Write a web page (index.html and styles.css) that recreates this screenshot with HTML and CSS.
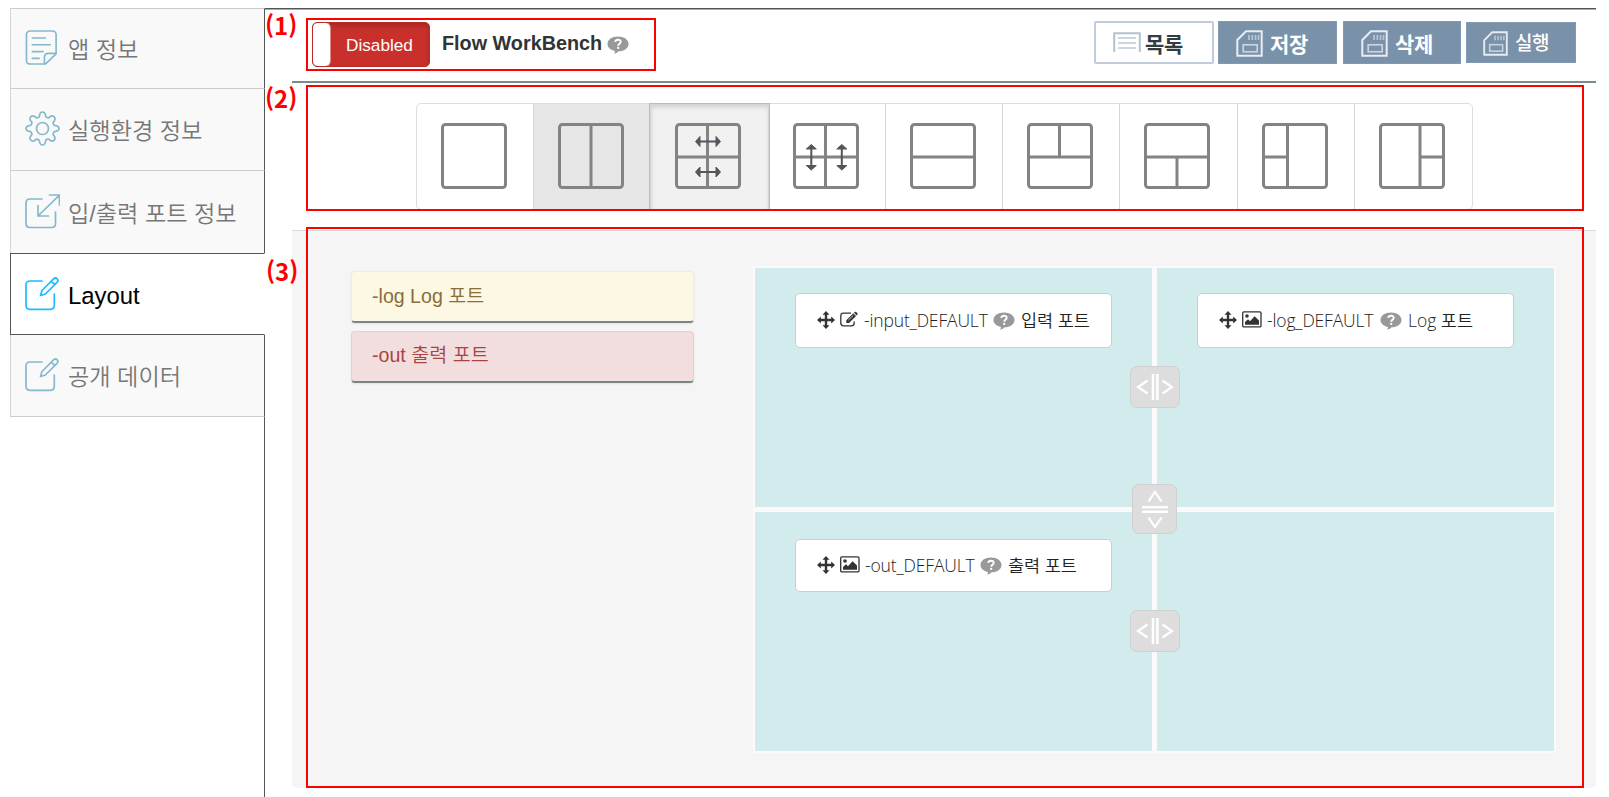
FILE: index.html
```html
<!DOCTYPE html>
<html lang="ko">
<head>
<meta charset="utf-8">
<title>Flow WorkBench</title>
<link rel="stylesheet" href="styles.css">
</head>
<body>
<svg class="defs" aria-hidden="true">
  <symbol id="help" viewBox="0 0 22 18">
    <path fill="#999" d="M11 .5C17 .5 21.500 3.700 21.500 7.900S17 15.300 11.500 15.300C10.800 16.500 9.300 17.400 7 17.800C7.700 16.800 8 16 7.900 14.900C3.600 14.100.5 11.400.5 7.900C.5 3.700 5 .5 11 .5Z"/>
    <path fill="none" stroke="#fff" stroke-width="1.900" d="M8.200 5.800C8.600 3 13.900 3 13.700 5.900C13.600 7.700 11.200 7.700 11.200 9.700"/>
    <rect x="10.200" y="10.900" width="2" height="2" fill="#fff"/>
  </symbol>
  <symbol id="move" viewBox="0 0 18 18">
    <path fill="#333" d="M9 0L12.500 3.800H10.200V7.800H14.200V5.500L18 9L14.200 12.500V10.200H10.200V14.200H12.500L9 18L5.500 14.200H7.800V10.200H3.800V12.500L0 9L3.800 5.500V7.800H7.800V3.800H5.500Z"/>
  </symbol>
  <symbol id="edit-port" viewBox="0 0 18 18">
    <path fill="none" stroke="#333" stroke-width="1.300" d="M11 2.200H3.500Q.8 2.200.8 4.900V12.100Q.8 14.800 3.500 14.800H11.500Q14.200 14.800 14.200 12.100V10.500"/>
    <path fill="#333" d="M6.300 9.300L13.300 2.300L16 5L9 12H6.300ZM14 1.600L14.800.9Q15.500.4 16.200 1L17.400 2.200Q18 3 17.300 3.700L16.600 4.400Z"/>
    <path stroke="#fff" stroke-width=".7" d="M8.300 9.200L13.300 4.300"/>
  </symbol>
  <symbol id="picture" viewBox="0 0 20 17">
    <rect x=".7" y=".9" width="18.300" height="15" rx="1.200" fill="none" stroke="#333" stroke-width="1.300"/>
    <circle cx="5" cy="5" r="1.800" fill="#333"/>
    <path fill="#333" d="M3 13.800V11L6 8.200L8 10.200L12.600 5.200L17 9.600V13.800Z"/>
  </symbol>
  <symbol id="sd" viewBox="0 0 27 27">
    <path fill="none" stroke="#e8edf3" stroke-width="2" d="M10 1.300H25.700V25.700H1.300V10Z"/>
    <path fill="none" stroke="#b9c6d5" stroke-width="1.700" d="M13 5V10M16.300 5V10M19.500 5V10M22.500 5V10"/>
    <rect x="7.200" y="14.800" width="14" height="7" fill="none" stroke="#c9d3df" stroke-width="1.700"/>
  </symbol>
  <symbol id="edit-nav" viewBox="0 0 35 34">
    <path d="M17 4.500H5Q1 4.500 1 8.500V28.800Q1 32.800 5 32.800H25.300Q29.300 32.800 29.300 28.800V17.500"/>
    <path d="M15.500 19L17 14L28.800 2.200Q30.300.8 32 2.200Q33.800 4 32.200 5.700L20.400 17.500ZM26.300 4.700L29.800 8.200"/>
  </symbol>
</svg>

<div class="page">
  <nav class="side">
    <a class="side-item info">
      <svg class="nav-icon" viewBox="0 0 35 36"><path d="M5 1H27.500Q31.500 1 31.500 5V24.500L20.500 35H5Q1 35 1 31V5Q1 1 5 1ZM31.200 24H23.500Q19.500 24 19.500 28V34.500M7 8.200H20.500M7 15.200H25.500M7 22.200H18M7 29.200H14"/></svg>
      <span>앱 정보</span>
    </a>
    <a class="side-item env">
      <svg class="nav-icon" viewBox="0 0 35 35"><circle cx="17.500" cy="17.500" r="6"/><path d="M14.300 5.700Q14.700 1 17.500 1T20.700 5.700Q22 7 23.600 6.900Q27 3.700 29.200 5.800T28.100 11.400Q27.900 13 29.300 14.300Q34 14.700 34 17.500T29.300 20.700Q28 22 28.100 23.600Q31.300 27 29.200 29.200T23.600 28.100Q22 27.900 20.700 29.300Q20.300 34 17.500 34T14.300 29.300Q13 28 11.400 28.100Q8 31.300 5.800 29.200T6.900 23.600Q7.100 22 5.700 20.700Q1 20.300 1 17.500T5.700 14.300Q7 13 6.900 11.400Q3.700 8 5.800 5.800T11.400 6.900Q13 7.100 14.300 5.700Z"/></svg>
      <span>실행환경 정보</span>
    </a>
    <a class="side-item port">
      <svg class="nav-icon" viewBox="0 0 35 35"><path d="M17 5H5Q1 5 1 9V29.500Q1 33.500 5 33.500H26.500Q30.500 33.500 30.500 29.500V18M24.500 1H34.500V11M34.500 1L13 22M13 11.500V22H23.500"/></svg>
      <span>입/출력 포트 정보</span>
    </a>
    <a class="side-item active">
      <svg class="nav-icon"><use href="#edit-nav"/></svg>
      <span>Layout</span>
    </a>
    <a class="side-item data">
      <svg class="nav-icon"><use href="#edit-nav"/></svg>
      <span>공개 데이터</span>
    </a>
    <div class="side-rest"></div>
  </nav>

  <main class="main">
    <header class="head">
      <div class="toggle"><i class="knob"></i><span>Disabled</span></div>
      <h1 class="title">Flow WorkBench</h1>
      <svg class="help"><use href="#help"/></svg>
      <div class="actions">
        <button class="btn list">
          <svg width="28" height="21" viewBox="0 0 28 21"><path fill="none" stroke="#b4c1d3" stroke-width="2" d="M1.200 20V1.200H26.800V20"/><path stroke="#ccd5e0" stroke-width="2" d="M5 6H23M5 11H23M5 16H23"/></svg>
          <span>목록</span>
        </button>
        <button class="btn save"><svg width="27" height="27"><use href="#sd"/></svg><span>저장</span></button>
        <button class="btn del"><svg width="27" height="27"><use href="#sd"/></svg><span>삭제</span></button>
        <button class="btn run"><svg width="25" height="25"><use href="#sd"/></svg><span>실행</span></button>
      </div>
    </header>

    <div class="layouts">
      <div class="cell"><svg viewBox="0 0 66 66"><rect class="fr" x="1.500" y="1.500" width="63" height="63" rx="3"/></svg></div>
      <div class="cell hover"><svg viewBox="0 0 66 66"><rect class="fr" x="1.500" y="1.500" width="63" height="63" rx="3"/><path class="fr" d="M33 2V64"/></svg></div>
      <div class="cell on"><svg viewBox="0 0 66 66"><rect class="fr" x="1.500" y="1.500" width="63" height="63" rx="3"/><path class="fr" d="M32.500 2V64M2 34H64"/><path class="arr" d="M24 18.500H42M24 49H42"/><path class="tip" d="M20.500 18.500L25 13.500V23.500ZM45.500 18.500L41 13.500V23.500ZM20.500 49L25 44V54ZM45.500 49L41 44V54Z"/></svg></div>
      <div class="cell"><svg viewBox="0 0 66 66"><rect class="fr" x="1.500" y="1.500" width="63" height="63" rx="3"/><path class="fr" d="M32.500 2V64M2 34H64"/><path class="arr" d="M18.300 25V44M48.800 25V44"/><path class="tip" d="M18.300 21.500L13.300 26H23.300ZM18.300 47L13.300 42.500H23.300ZM48.800 21.500L43.800 26H53.800ZM48.800 47L43.800 42.500H53.800Z"/></svg></div>
      <div class="cell"><svg viewBox="0 0 66 66"><rect class="fr" x="1.500" y="1.500" width="63" height="63" rx="3"/><path class="fr" d="M2 34H64"/></svg></div>
      <div class="cell"><svg viewBox="0 0 66 66"><rect class="fr" x="1.500" y="1.500" width="63" height="63" rx="3"/><path class="fr" d="M2 34H64M32.500 2V34"/></svg></div>
      <div class="cell"><svg viewBox="0 0 66 66"><rect class="fr" x="1.500" y="1.500" width="63" height="63" rx="3"/><path class="fr" d="M2 34H64M33 34V64"/></svg></div>
      <div class="cell"><svg viewBox="0 0 66 66"><rect class="fr" x="1.500" y="1.500" width="63" height="63" rx="3"/><path class="fr" d="M25.500 2V64M2 34H25"/></svg></div>
      <div class="cell"><svg viewBox="0 0 66 66"><rect class="fr" x="1.500" y="1.500" width="63" height="63" rx="3"/><path class="fr" d="M41 2V64M41 34H64"/></svg></div>
    </div>

    <section class="panel">
      <div class="ports">
        <div class="chip log">-log Log 포트</div>
        <div class="chip out">-out 출력 포트</div>
      </div>
      <div class="grid">
        <div class="pane">
          <div class="port-box"><svg class="mv"><use href="#move"/></svg><svg class="ed"><use href="#edit-port"/></svg><span class="name w-input">-input_DEFAULT</span><svg class="help"><use href="#help"/></svg><span class="desc">입력 포트</span></div>
        </div>
        <div class="pane">
          <div class="port-box"><svg class="mv"><use href="#move"/></svg><svg class="pic"><use href="#picture"/></svg><span class="name w-log">-log_DEFAULT</span><svg class="help"><use href="#help"/></svg><span class="desc">Log 포트</span></div>
        </div>
        <div class="pane low">
          <div class="port-box"><svg class="mv"><use href="#move"/></svg><svg class="pic"><use href="#picture"/></svg><span class="name w-out">-out_DEFAULT</span><svg class="help"><use href="#help"/></svg><span class="desc">출력 포트</span></div>
        </div>
        <div class="pane low"></div>
        <div class="grip top"><svg width="38" height="28" viewBox="0 0 38 28"><path d="M11.500 7.500L2 14L11.500 20.500M26.500 7.500L36 14L26.500 20.500"/><path class="bar" d="M17 1V27M21.400 1V27"/></svg></div>
        <div class="grip mid"><svg width="28" height="38" viewBox="0 0 28 38"><path d="M7.500 11.500L14 2L20.500 11.500M7.500 27.500L14 37L20.500 27.500"/><path class="bar" d="M1 17.300H27M1 21.700H27"/></svg></div>
        <div class="grip bottom"><svg width="38" height="28" viewBox="0 0 38 28"><path d="M11.500 7.500L2 14L11.500 20.500M26.500 7.500L36 14L26.500 20.500"/><path class="bar" d="M17 1V27M21.400 1V27"/></svg></div>
      </div>
    </section>
  </main>
</div>

<div class="mark m1"><b>(1)</b></div>
<div class="mark m2"><b>(2)</b></div>
<div class="mark m3"><b>(3)</b></div>
</body>
</html>
```
FILE: styles.css
```css
* { box-sizing: border-box; }
body {
  margin: 0;
  height: 797px;
  overflow: hidden;
  position: relative;
  background: #fff;
  font-family: "Liberation Sans", "Noto Sans CJK KR", sans-serif;
}
.defs { position: absolute; width: 0; height: 0; }
.page { display: flex; height: 797px; padding: 8px 13px 0 10px; }

/* Sidebar */
.side { width: 255px; display: flex; flex-direction: column; }
.side-item {
  display: flex;
  align-items: center;
  gap: 8px;
  padding: 0 0 0 14px;
  height: 82px;
  color: #777;
  font-size: 23.200px;
  font-weight: 350;
  background: #f9f9f9;
  border-left: 1px solid #d4d4d4;
  border-top: 1px solid #ccc;
  border-right: 1px solid #555;
  white-space: nowrap;
}
.side-item span { line-height: 30px; padding-top: 3px; }
.info { height: 80px; }
.port { height: 83px; }
.active {
  color: #000;
  background: #fff;
  font-size: 23.900px;
  font-weight: 400;
  border: 1px solid #555;
  border-right-color: transparent;
}
.data { height: 82px; border-top-width: 0; border-bottom: 1px solid #ccc; }
.side-rest { flex: 1; border-right: 1px solid #555; }
.nav-icon {
  width: 35px;
  height: 35px;
  margin-bottom: 2px;
  fill: none;
  stroke: #86b8cc;
  stroke-width: 1.700;
  stroke-linejoin: round;
  stroke-linecap: round;
}
.active .nav-icon { stroke: #1cbcff; }

/* Main column */
.main { flex: 1; border-top: 1px solid #555; box-shadow: inset 0 1px #aaa; padding-left: 27px; }
.head {
  display: flex;
  height: 74px;
  padding: 12px 20px 0 20px;
  align-items: flex-start;
  border-bottom: 2px solid #7b8a8b;
}
.toggle {
  display: flex;
  align-items: center;
  width: 118px;
  height: 45px;
  margin-top: 1px;
  border: 1px solid #b92c28;
  border-radius: 5px;
  background: #c9302c;
  box-shadow: inset 0 3px 5px rgba(0,0,0,.18);
  color: #fff;
  font-size: 17.200px;
  overflow: hidden;
}
.knob { width: 17px; height: 43px; background: #fff; border-radius: 5px; margin-right: 16px; box-shadow: 0 0 0 1px #e08a88; }
.toggle span { line-height: 20px; }
.title { margin: 10px 0 0 12px; font-size: 19.800px; line-height: 24px; color: #333; width: 160px; white-space: nowrap; }
.help { width: 22px; height: 18px; flex: none; }
.head .help { margin: 15px 0 0 5px; }
.actions { display: flex; margin-left: auto; align-items: flex-start; }
.btn {
  display: flex;
  align-items: center;
  padding: 0 0 0 17px;
  height: 43px;
  width: 119px;
  border: 1px solid #8299b3;
  background: #7a91aa;
  color: #fff;
  font: bold 21px "Noto Sans CJK KR", sans-serif;
  line-height: 24px;
  white-space: nowrap;
  letter-spacing: -.4px;
}
.btn svg { flex: none; margin-top: 2px; }
.btn span { margin-left: 7px; }
.list { width: 120px; background: #fff; color: #333c42; border: 2px solid #c1cbdc; border-radius: 2px; }
.list svg { margin-top: 0; }
.list span { margin-left: 4px; }
.save { margin-left: 4px; }
.del { margin-left: 6px; width: 118px; }
.run { margin: 1px 0 0 5px; width: 110px; height: 41px; font-size: 19px; font-weight: 500; padding-left: 16px; }
.run span { margin: -2px 0 0 7px; }

/* Layout picker */
.layouts {
  display: grid;
  grid-template-columns: repeat(9, 1fr);
  width: 1057px;
  height: 107px;
  margin: 20px 0 20px 124px;
  border: 1px solid #ddd;
  border-radius: 5px;
}
.cell { margin-left: -1px; padding: 19px 0 0 24px; border-left: 1px solid #d6d6d6; }
.cell:first-child { border-left-color: transparent; padding-left: 24px; }
.cell svg { width: 66px; height: 66px; display: block; }
.cell.hover { background: #e6e6e6; }
.cell.on { background: #f1f1f1; box-shadow: inset 0 3px 5px rgba(0,0,0,.14), 0 0 0 1px #bbb; }
.fr { fill: none; stroke: #838383; stroke-width: 3; }
.arr { stroke: #55565c; stroke-width: 2; }
.tip { fill: #55565c; stroke: #55565c; stroke-width: 1; stroke-linejoin: round; }

/* Work area */
.panel {
  display: flex;
  align-items: flex-start;
  height: 558px;
  padding: 35px 40px 0 59px;
  background: #f5f5f5;
  border-top: 1px solid #ddd;
  border-radius: 0 0 5px 5px;
}
.ports { display: flex; flex-direction: column; gap: 8px; width: 343px; padding-top: 5px; }
.chip {
  height: 52px;
  padding: 11px 20px;
  font-size: 19.600px;
  font-weight: 350;
  line-height: 26px;
  border: 1px solid #faebcc;
  border-bottom: 2px solid #788686;
  border-radius: 4px;
  box-shadow: 0 1px 2px rgba(0,0,0,.08);
}
.log { background: #fcf8e3; color: #8a6d3b; }
.out { background: #f2dede; color: #a94442; border-color: #ebccd1; border-bottom-color: #788686; padding-top: 10px; }
.grid {
  position: relative;
  display: grid;
  grid-template-columns: 397px 397px;
  grid-template-rows: 239px 239px;
  gap: 5px;
  margin-left: 59px;
  border: 2px solid #fafafa;
  background: #fafafa;
}
.pane { background: #d2ebed; padding: 25px 40px; }
.low { padding-top: 27px; }
.port-box {
  display: flex;
  align-items: center;
  height: 55px;
  padding: 0 0 2px 21px;
  background: #fff;
  border: 1px solid #ccc;
  border-radius: 5px;
  color: #222;
  font: 350 17.500px "Open Sans", "Noto Sans CJK KR", sans-serif;
  white-space: nowrap;
}
.low .port-box { height: 53px; }
.mv { width: 18px; height: 18px; margin-right: 5px; flex: none; }
.ed { width: 18px; height: 18px; margin-right: 6px; flex: none; }
.pic { width: 20px; height: 17px; margin-right: 5px; flex: none; }
.name { letter-spacing: -.15px; }
.w-input { width: 125px; }
.w-log { width: 109px; }
.w-out { width: 111px; }
.port-box .help { margin: 3px 6px 0 4px; }
.grip {
  position: absolute;
  display: flex;
  align-items: center;
  justify-content: center;
  width: 50px;
  height: 42px;
  left: 375px;
  background: #ddd;
  border: 1px solid #d0d0d0;
  border-radius: 7px;
}
.grip path { fill: none; stroke: #fff; stroke-width: 2.200; }
.grip .bar { stroke-width: 2.600; }
.grip.top { top: 98px; }
.grip.mid { width: 45px; height: 50px; left: 377px; top: 216px; }
.grip.bottom { top: 342px; }

/* Numbered callouts */
.mark { position: absolute; left: 306px; width: 1278px; border: 2px solid #f00; }
.mark b {
  position: absolute;
  left: -43px;
  top: -9px;
  color: #f00;
  font: bold 24px/28px "Noto Sans CJK KR", sans-serif;
}
.m1 { top: 18px; width: 350px; height: 53px; }
.m2 { top: 85px; height: 126px; }
.m3 { top: 227px; height: 561px; }
.m2 b { top: -3px; }
.m3 b { top: 28px; left: -42px; }
```
